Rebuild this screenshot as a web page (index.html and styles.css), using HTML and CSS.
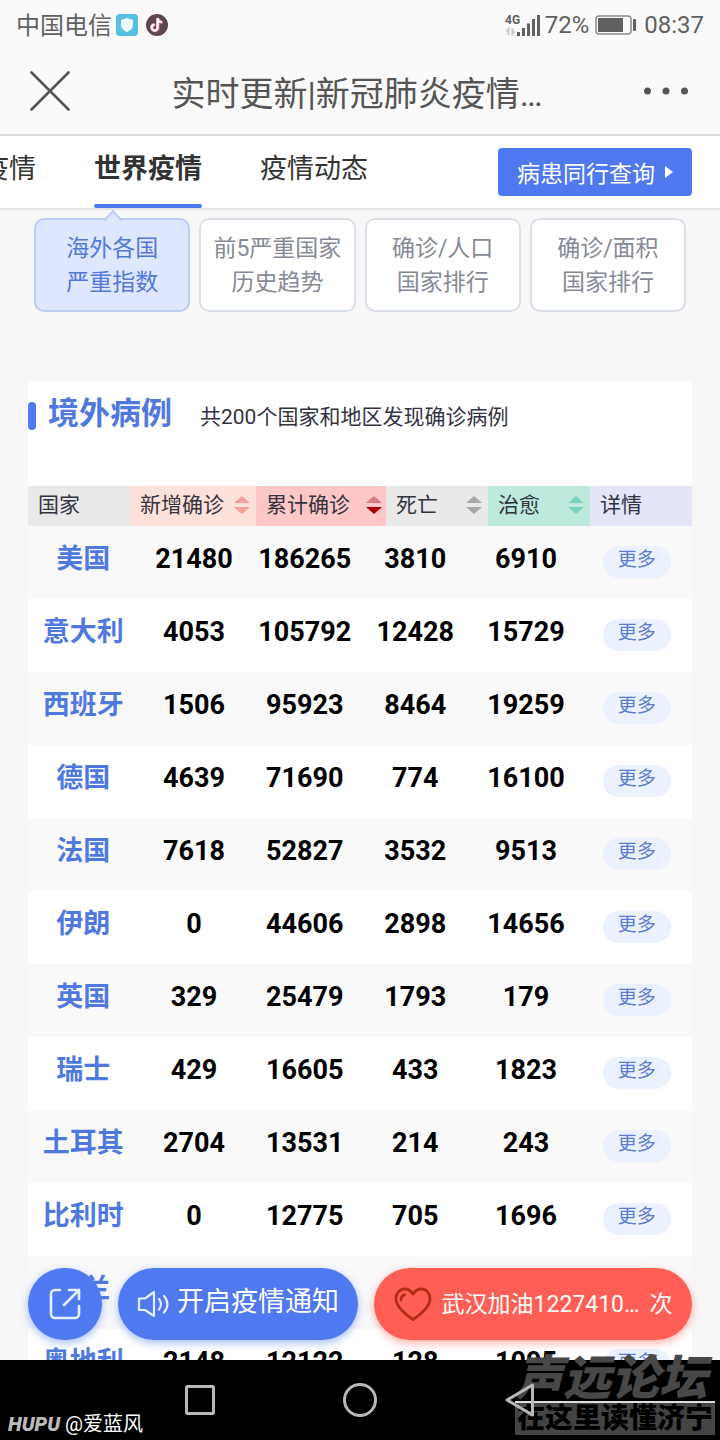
FILE: index.html
```html
<!DOCTYPE html>
<html lang="zh-CN">
  <head>
    <title>实时更新|新冠肺炎疫情</title>
    <meta charset="UTF-8" />
    <meta name="viewport" content="width=device-width, initial-scale=1" />
    <link rel="stylesheet" href="styles.css">
  </head>

  <body>
    <!-- Phone status bar -->
    <div class="status">
      <span class="carrier">中国电信</span>
      <svg class="app-icon" width="22" height="22" viewBox="0 0 22 22">
        <rect width="22" height="22" rx="4" fill="#58bfe4"/>
        <path d="M11 4l6 2v5c0 3.500-2.500 5.500-6 7-3.500-1.500-6-3.500-6-7V6z" fill="#eefaff"/>
      </svg>
      <svg class="app-icon" width="22" height="22" viewBox="0 0 22 22">
        <circle cx="11" cy="11" r="11" fill="#5f4652"/>
        <g fill="none" stroke-width="2.400">
          <path d="M12.500 4.500v9.500a3 3 0 1 1-3-3M12.500 4.500c.3 2.500 2 4 4.500 4" stroke="#e0607c"/>
          <path d="M11.500 4v9.500a3 3 0 1 1-3-3M11.500 4c.3 2.500 2 4 4.500 4" stroke="#fff"/>
        </g>
      </svg>
      <span class="status-right">
        <svg width="36" height="24" viewBox="0 0 36 24">
          <text x="0" y="11" class="net">4G</text>
          <path d="M3.500 22v-6l-2 2.500M7.500 15v6l2-2.500" fill="none" stroke="#c8c8c8" stroke-width="2"/>
          <path d="M13.500 23v-4M18.500 23v-8M23.500 23V10.500M28.500 23V6M33.500 23V2" stroke="#606060" stroke-width="3"/>
        </svg>
        <span class="battery-text">72%</span>
        <svg class="battery" width="41" height="20" viewBox="0 0 41 20">
          <rect x="1" y="1" width="35" height="18" rx="3" fill="none" stroke="#8a8a8a" stroke-width="1.500"/>
          <rect x="3" y="3" width="25" height="14" fill="#606060"/>
          <rect x="38" y="4" width="3" height="12" rx="1" fill="#606060"/>
        </svg>
        <span>08:37</span>
      </span>
    </div>

    <!-- Title bar -->
    <header class="titlebar">
      <button class="icon-btn" aria-label="关闭">
        <svg width="40" height="40" viewBox="0 0 40 40"><path d="M1.500 1.500l37 37M38.500 1.500l-37 37" stroke="#555" stroke-width="2.600" stroke-linecap="round"/></svg>
      </button>
      <h1>实时更新|新冠肺炎疫情…</h1>
      <button class="icon-btn" aria-label="菜单">
        <svg width="44" height="8" viewBox="0 0 44 8" fill="#555"><circle cx="3.500" cy="4" r="3.500"/><circle cx="22" cy="4" r="3.500"/><circle cx="40.500" cy="4" r="3.500"/></svg>
      </button>
    </header>

    <!-- Tabs -->
    <nav class="tabs">
      <a href="#china">疫情</a>
      <a href="#world" class="active">世界疫情</a>
      <a href="#news">疫情动态</a>
      <button class="query">病患同行查询<span class="caret"></span></button>
    </nav>

    <main>
      <div class="cards">
        <button class="card active">海外各国<br>严重指数</button>
        <button class="card">前5严重国家<br>历史趋势</button>
        <button class="card">确诊/人口<br>国家排行</button>
        <button class="card">确诊/面积<br>国家排行</button>
      </div>

      <section class="cases">
        <div class="cases-head">
          <h2>境外病例</h2>
          <p>共200个国家和地区发现确诊病例</p>
        </div>
        <table>
          <thead>
            <tr>
              <th class="gray">国家</th>
              <th class="orange"><button>新增确诊<svg width="16" height="18" viewBox="0 0 16 18"><path class="up" d="M8 0l8 7H0z"/><path class="down" d="M0 11h16l-8 7z"/></svg></button></th>
              <th class="red"><button>累计确诊<svg width="16" height="18" viewBox="0 0 16 18"><path class="up" d="M8 0l8 7H0z"/><path class="down" d="M0 11h16l-8 7z"/></svg></button></th>
              <th class="gray"><button>死亡<svg width="16" height="18" viewBox="0 0 16 18"><path class="up" d="M8 0l8 7H0z"/><path class="down" d="M0 11h16l-8 7z"/></svg></button></th>
              <th class="green"><button>治愈<svg width="16" height="18" viewBox="0 0 16 18"><path class="up" d="M8 0l8 7H0z"/><path class="down" d="M0 11h16l-8 7z"/></svg></button></th>
              <th class="violet">详情</th>
            </tr>
          </thead>
          <tbody>
            <tr><th>美国</th><td>21480</td><td>186265</td><td>3810</td><td>6910</td><td><button class="more">更多</button></td></tr>
            <tr><th>意大利</th><td>4053</td><td>105792</td><td>12428</td><td>15729</td><td><button class="more">更多</button></td></tr>
            <tr><th>西班牙</th><td>1506</td><td>95923</td><td>8464</td><td>19259</td><td><button class="more">更多</button></td></tr>
            <tr><th>德国</th><td>4639</td><td>71690</td><td>774</td><td>16100</td><td><button class="more">更多</button></td></tr>
            <tr><th>法国</th><td>7618</td><td>52827</td><td>3532</td><td>9513</td><td><button class="more">更多</button></td></tr>
            <tr><th>伊朗</th><td>0</td><td>44606</td><td>2898</td><td>14656</td><td><button class="more">更多</button></td></tr>
            <tr><th>英国</th><td>329</td><td>25479</td><td>1793</td><td>179</td><td><button class="more">更多</button></td></tr>
            <tr><th>瑞士</th><td>429</td><td>16605</td><td>433</td><td>1823</td><td><button class="more">更多</button></td></tr>
            <tr><th>土耳其</th><td>2704</td><td>13531</td><td>214</td><td>243</td><td><button class="more">更多</button></td></tr>
            <tr><th>比利时</th><td>0</td><td>12775</td><td>705</td><td>1696</td><td><button class="more">更多</button></td></tr>
            <tr><th>荷兰</th><td></td><td></td><td></td><td></td><td></td></tr>
            <tr><th>奥地利</th><td>2148</td><td>12122</td><td>128</td><td>1095</td><td><button class="more">更多</button></td></tr>
          </tbody>
        </table>
      </section>

      <!-- Floating actions -->
      <div class="actions">
        <button class="pill share" aria-label="分享">
          <svg width="32" height="32" viewBox="0 0 32 32" fill="none" stroke="#e6edff" stroke-width="2.600" stroke-linecap="round" stroke-linejoin="round"><path d="M11 2H6a4 4 0 0 0-4 4v20a4 4 0 0 0 4 4h20a4 4 0 0 0 4-4v-8M15 17L30 2M20 2h10v9"/></svg>
        </button>
        <button class="pill notify">
          <svg width="32" height="28" viewBox="0 0 32 28" fill="none" stroke="#e6edff" stroke-width="2.200" stroke-linecap="round" stroke-linejoin="round"><path d="M2 8.500h6L17 2v24L8 20H2zM22 9c2.500 3 2.500 7.500 0 10.500M27 6c4.500 5 4.500 11.500 0 16.500"/></svg>
          <span>开启疫情通知</span>
        </button>
        <button class="pill cheer">
          <svg width="38" height="34" viewBox="0 0 38 34" fill="none" stroke="#b02c14" stroke-width="2.800" stroke-linecap="round" stroke-linejoin="round"><path d="M19 7C16 2.500 13.500 2 11 2 5.500 2 2 6.500 2 12c0 8 9 15 17 20.500C27 27 36 20 36 12c0-5.500-3.500-10-9-10-2.500 0-5 .5-8 5zM7 13c0-3 1.500-5 3.500-5"/></svg>
          <span>武汉加油1227410…</span>
          <span>次</span>
        </button>
      </div>
    </main>

    <!-- System navigation -->
    <footer class="sysnav">
      <button aria-label="最近任务"><svg width="32" height="32" viewBox="0 0 32 32"><rect x="2.500" y="2.500" width="27" height="27" rx="1"/></svg></button>
      <button aria-label="主屏幕"><svg width="36" height="36" viewBox="0 0 36 36"><circle cx="18" cy="18" r="15.500"/></svg></button>
      <button aria-label="返回"><svg width="32" height="36" viewBox="0 0 32 36"><path d="M28.500 3v30L3 18z"/></svg></button>
      <div class="author"><b>HUPU</b> @爱蓝风</div>
      <div class="forum">
        <div class="forum-name">声远论坛</div>
        <div class="forum-slogan">在这里读懂济宁</div>
      </div>
    </footer>
  </body>
</html>
```

FILE: styles.css
```css
* {
  box-sizing: border-box;
}

body {
  margin: 0;
  height: 100vh;
  display: flex;
  flex-direction: column;
  overflow: hidden;
  background: #f7f7f8;
  color: #333;
  font-family: Roboto, "Noto Sans CJK SC", sans-serif;
}

button {
  margin: 0;
  padding: 0;
  border: none;
  background: none;
  color: inherit;
  font: inherit;
  cursor: pointer;
}

svg {
  display: block;
  flex: none;
}

/* Status bar */
.status {
  display: flex;
  align-items: center;
  height: 50px;
  flex: none;
  padding: 0 16px;
  background: #fafafa;
  color: #606060;
  font-size: 24px;
}
.carrier {
  padding-bottom: 4px;
}
.app-icon {
  margin-left: 4px;
}
.app-icon + .app-icon {
  margin-left: 8px;
}
.status-right {
  display: flex;
  align-items: center;
  margin-left: auto;
}
.net {
  font-size: 12px;
  font-weight: bold;
  fill: #606060;
}
.battery-text {
  margin-left: 4px;
}
.battery {
  margin: 0 8px 0 6px;
}

/* Title bar */
.titlebar {
  display: flex;
  align-items: center;
  justify-content: space-between;
  height: 86px;
  flex: none;
  padding: 0 32px 2px 30px;
  background: #fafafa;
  border-bottom: 2px solid #dcdcdc;
}
.titlebar h1 {
  margin: 0;
  color: #555;
  font-size: 34px;
  font-weight: normal;
}

/* Tabs */
.tabs {
  display: flex;
  align-items: center;
  gap: 58px;
  height: 74px;
  flex: none;
  padding-right: 28px;
  background: #fff;
  border-bottom: 2px solid #e3e3e3;
}
.tabs a {
  position: relative;
  height: 72px;
  flex: none;
  color: #333;
  font-size: 27px;
  line-height: 66px;
  text-decoration: none;
  white-space: nowrap;
}
.tabs a:first-child {
  margin-left: -18px;
}
.tabs a.active {
  font-weight: bold;
}
.tabs a.active::after {
  content: "";
  position: absolute;
  left: 0;
  right: 0;
  bottom: 0;
  height: 4px;
  border-radius: 2px;
  background: #4e79f0;
}
.query {
  display: flex;
  align-items: center;
  justify-content: center;
  gap: 10px;
  width: 194px;
  height: 48px;
  margin-left: auto;
  border-radius: 4px;
  background: #4e79f0;
  color: #fff;
  font-size: 23px;
  white-space: nowrap;
}
.caret {
  border: 6px solid transparent;
  border-left: 8px solid #fff;
  border-right: none;
}

/* Content */
main {
  position: relative;
  flex: 1;
  min-height: 0;
  overflow: hidden;
}
.cards {
  display: grid;
  grid-template-columns: repeat(4, 1fr);
  gap: 9px;
  padding: 8px 34px 70px;
}
.card {
  position: relative;
  height: 94px;
  padding-top: 2px;
  border: 2px solid #d9e0ea;
  border-radius: 10px;
  background: #fff;
  color: #858a96;
  font-size: 23px;
  line-height: 34px;
}
.card.active {
  border-color: #bccdf5;
  background: #dfe7ff;
  color: #5279d8;
}
/* pointer on top of the selected card */
.card.active::before {
  content: "";
  position: absolute;
  top: -7px;
  left: 50%;
  width: 12px;
  height: 12px;
  margin-left: -6px;
  border: solid #bccdf5;
  border-width: 2px 0 0 2px;
  background: linear-gradient(135deg, #dfe7ff 60%, transparent 60%);
  transform: rotate(45deg);
}

.cases {
  margin: 0 28px;
  background: #fff;
}
.cases-head {
  display: flex;
  align-items: center;
  height: 104px;
  padding-bottom: 40px;
}
.cases-head::before {
  content: "";
  width: 8px;
  height: 28px;
  margin: 4px 12px 0 0;
  border-radius: 4px;
  background: #4e79f0;
}
.cases-head h2 {
  margin: 0;
  color: #5079e0;
  font-size: 31px;
  line-height: 40px;
}
.cases-head p {
  margin: 2px 0 0 28px;
  color: #33333f;
  font-size: 21px;
}

/* Table: header columns follow their labels, body columns are even */
table, thead, tbody {
  display: block;
}
tr {
  display: grid;
}
thead tr {
  grid-template-columns: 102fr 126fr 130fr 102fr 102fr 102fr;
}
thead th {
  height: 40px;
  padding: 0 6px 0 10px;
  color: #33333f;
  font-size: 21px;
  font-weight: normal;
  line-height: 38px;
  text-align: left;
}
thead button {
  display: flex;
  align-items: center;
  justify-content: space-between;
  width: 100%;
  height: 38px;
}
.gray { background: #e9e9e9; }
.gray path { fill: #a9a9a9; }
.orange { background: #ffe1db; }
.orange path { fill: #f79e99; }
thead .red { padding-right: 4px; background: #ffc7c8; }
.red .up { fill: #dc7c7c; }
.red .down { fill: #ad0000; }
.green { background: #beeadd; }
.green path { fill: #7bd3bd; }
.violet { background: #e3e5f9; }

tbody tr {
  grid-template-columns: repeat(6, 1fr);
  height: 73px;
}
tbody tr:nth-child(odd) {
  background: #f9f9fa;
}
tbody th, tbody td {
  padding: 0;
  color: #000;
  font-size: 27px;
  font-weight: bold;
  line-height: 66px;
  text-align: center;
}
tbody th {
  color: #5079e0;
}
.more {
  display: block;
  width: 68px;
  height: 32px;
  margin: 20px auto 0;
  padding-bottom: 4px;
  border-radius: 16px;
  background: #ebf1ff;
  color: #5a7bd0;
  font-size: 19px;
  font-weight: normal;
  line-height: 28px;
}

/* Floating actions */
.actions {
  position: absolute;
  left: 0;
  right: 0;
  bottom: 20px;
  display: grid;
  grid-template-columns: 74px 240px 1fr;
  gap: 16px;
  padding: 0 28px;
}
.pill {
  display: flex;
  align-items: center;
  justify-content: center;
  height: 72px;
  border-radius: 36px;
  background: #4e79f0;
  box-shadow: 0 3px 8px rgba(78, 121, 240, 0.5);
  color: #fff;
  white-space: nowrap;
}
.notify {
  gap: 8px;
  font-size: 27px;
}
.notify span {
  padding-bottom: 10px;
}
.cheer {
  background: #ff5e55;
  box-shadow: 0 3px 8px rgba(255, 94, 85, 0.5);
  font-size: 23px;
}
.cheer span {
  margin-left: 10px;
  padding-bottom: 4px;
}

/* System navigation */
.sysnav {
  position: relative;
  display: flex;
  align-items: center;
  justify-content: center;
  gap: 120px;
  height: 80px;
  flex: none;
  background: #000;
}
.sysnav button {
  display: flex;
  justify-content: center;
  width: 40px;
}
.sysnav svg {
  position: relative;
  z-index: 1;
  fill: none;
  stroke: #b8b8b8;
  stroke-width: 3;
  stroke-linejoin: round;
}
.author {
  position: absolute;
  left: 8px;
  bottom: 4px;
  color: #fff;
  font-size: 20px;
  line-height: 24px;
}
.author b {
  color: #bbb;
  font-style: italic;
  font-weight: 900;
}
.forum {
  position: absolute;
  right: 5px;
  bottom: 5px;
  width: 200px;
  white-space: nowrap;
}
.forum-name {
  color: #484848;
  font-size: 48px;
  font-style: italic;
  font-weight: 900;
  line-height: 44px;
}
.forum-slogan {
  border-top: 2px solid #ddd;
  background: #444;
  color: #000;
  font-size: 28px;
  font-weight: 900;
  line-height: 32px;
  text-align: center;
}
```
